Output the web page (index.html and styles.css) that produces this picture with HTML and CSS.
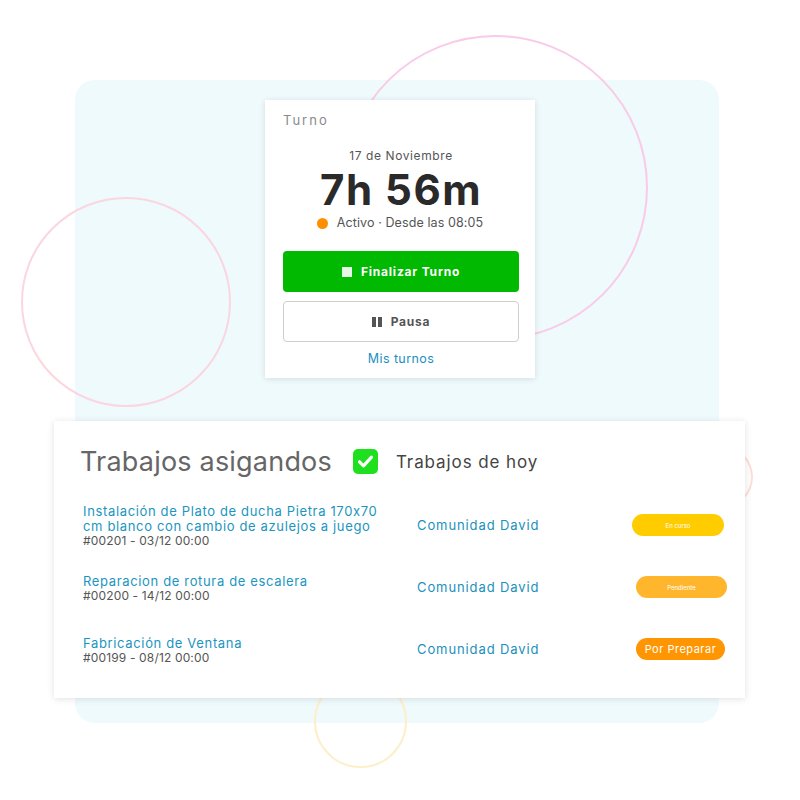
FILE: index.html
```html
<!DOCTYPE html>
<html lang="es">
<head>
  <meta charset="UTF-8">
  <meta name="viewport" content="width=device-width, initial-scale=1.0">
  <title>Turno</title>
  <link rel="stylesheet" href="styles.css">
</head>
<body>
  <div class="stage">
    <div class="panel"></div>
    <div class="ring ring-left"></div>
    <div class="ring ring-big"></div>
    <div class="ring ring-yellow"></div>
    <div class="ring ring-orange"></div>

    <div class="turno">
      <div class="turno-title">Turno</div>
      <div class="fecha">17 de Noviembre</div>
      <div class="tiempo">7h 56m</div>
      <div class="estado"><span class="dot"></span>Activo · Desde las 08:05</div>
      <button class="btn btn-fin"><span class="stop"></span>Finalizar Turno</button>
      <button class="btn btn-pausa"><span class="pause"><i></i><i></i></span>Pausa</button>
      <a class="mis" href="#">Mis turnos</a>
    </div>

    <div class="trabajos">
      <div class="head">
        <h2>Trabajos asigandos</h2>
        <span class="check">
          <svg width="25" height="25" viewBox="0 0 25 25"><rect x="0" y="0" width="25" height="25" rx="5" fill="#1ee01e"/><path d="M6.5 12.8l4 4 8-8.6" fill="none" stroke="#fff" stroke-width="3.2" stroke-linecap="round" stroke-linejoin="round"/></svg>
        </span>
        <span class="hoy">Trabajos de hoy</span>
      </div>

      <div class="row">
        <div class="job">
          <div class="job-name">Instalación de Plato de ducha Pietra 170x70 cm blanco con cambio de azulejos a juego</div>
          <div class="job-id">#00201 - 03/12 00:00</div>
        </div>
        <div class="cliente">Comunidad David</div>
        <span class="badge curso">En curso</span>
      </div>
      <div class="row">
        <div class="job">
          <div class="job-name">Reparacion de rotura de escalera</div>
          <div class="job-id">#00200 - 14/12 00:00</div>
        </div>
        <div class="cliente">Comunidad David</div>
        <span class="badge pend">Pendiente</span>
      </div>
      <div class="row">
        <div class="job">
          <div class="job-name">Fabricación de Ventana</div>
          <div class="job-id">#00199 - 08/12 00:00</div>
        </div>
        <div class="cliente">Comunidad David</div>
        <span class="badge prep">Por Preparar</span>
      </div>
    </div>
  </div>
</body>
</html>
```

FILE: styles.css
```css
body {
    margin: 0;
    background: #fff;
    font-family: Inter, "Noto Sans", sans-serif;
}

.stage {
    position: relative;
    width: 800px;
    height: 800px;
    padding-top: 100px;
    box-sizing: border-box;
    overflow: hidden;
}

/* fondo decorativo */
.panel {
    position: absolute;
    left: 75px;
    top: 80px;
    width: 644px;
    height: 643px;
    background: #eefafc;
    border-radius: 20px;
}
.ring {
    position: absolute;
    border-radius: 50%;
    box-sizing: border-box;
}
.ring-left {
    left: 21px;
    top: 197px;
    width: 210px;
    height: 210px;
    border: 2px solid #fcd6df;
}
.ring-big {
    left: 343px;
    top: 35px;
    width: 305px;
    height: 305px;
    border: 2px solid #f9cbe8;
}
.ring-yellow {
    left: 314px;
    top: 675px;
    width: 93px;
    height: 93px;
    border: 2px solid #fdefc9;
}
.ring-orange {
    left: 692px;
    top: 446px;
    width: 61px;
    height: 62px;
    border: 2px solid #fddfd6;
}

/* tarjeta turno */
.turno {
    position: relative;
    margin-left: 265px;
    width: 270px;
    height: 278px;
    box-sizing: border-box;
    background: #fff;
    box-shadow: 0 1px 6px rgba(0, 0, 0, 0.12);
    padding: 12px 16px 0 18px;
    text-align: center;
    color: #555;
}
.turno-title {
    text-align: left;
    font-size: 13px;
    letter-spacing: 2px;
    color: #8a8a8a;
    line-height: 16px;
}
.fecha {
    margin-top: 20px;
    font-size: 12px;
    line-height: 16px;
    color: #555;
    letter-spacing: 0.6px;
}
.tiempo {
    margin-top: 3px;
    font-size: 42px;
    font-weight: 700;
    line-height: 46px;
    color: #2a2a2a;
    letter-spacing: 1.5px;
}
.estado {
    margin-top: 2px;
    font-size: 12.5px;
    line-height: 16px;
    display: flex;
    justify-content: center;
    align-items: center;
    gap: 9px;
    padding-right: 2px;
    letter-spacing: 0.1px;
}
.dot {
    width: 11px;
    height: 11px;
    border-radius: 50%;
    background: #ff8f00;
}
.btn {
    display: flex;
    justify-content: center;
    align-items: center;
    gap: 9px;
    width: 236px;
    height: 41px;
    box-sizing: border-box;
    font-family: inherit;
    font-size: 12px;
    font-weight: 700;
    letter-spacing: 0.8px;
    border-radius: 4px;
    cursor: pointer;
}
.btn-fin {
    margin-top: 20px;
    border: none;
    background: #00b900;
    color: #fff;
}
.stop {
    width: 10px;
    height: 10px;
    background: #e6f7e6;
}
.btn-pausa {
    margin-top: 9px;
    border: 1px solid #cfcfcf;
    background: #fff;
    color: #555;
}
.pause {
    display: flex;
    gap: 2px;
}
.pause i {
    width: 4px;
    height: 10px;
    background: #555;
}
.mis {
    display: block;
    margin-top: 9px;
    font-size: 12.5px;
    color: #1b8fc0;
    text-decoration: none;
    letter-spacing: 0.4px;
}

/* tarjeta trabajos */
.trabajos {
    position: relative;
    margin: 43px 0 0 54px;
    width: 691px;
    height: 277px;
    box-sizing: border-box;
    background: #fff;
    box-shadow: 0 1px 7px rgba(0, 0, 0, 0.12);
    padding: 25px 21px 0 29px;
}
.head {
    display: flex;
    align-items: center;
    height: 30px;
    margin-bottom: 18px;
}
.head h2 {
    margin: 0 21px 0 -3px;
    font-size: 27px;
    font-weight: 400;
    color: #666;
    letter-spacing: 0.2px;
}
.check {
    display: flex;
}
.check svg {
    display: block;
}
.hoy {
    margin-left: 18px;
    font-size: 17px;
    color: #444;
    padding-top: 2px;
    letter-spacing: 0.9px;
}
.row {
    display: grid;
    grid-template-columns: 334px 215px 92px;
    align-items: center;
    height: 62px;
}
.job {
    padding-top: 2px;
}
.job-name {
    font-size: 13px;
    line-height: 15px;
    color: #1b95c0;
    letter-spacing: 0.65px;
    padding-right: 30px;
}
.job-id {
    font-size: 12px;
    line-height: 14px;
    color: #555;
    letter-spacing: 0.15px;
}
.cliente {
    font-size: 13px;
    color: #1a90bc;
    letter-spacing: 0.9px;
}
.badge {
    display: flex;
    justify-content: center;
    align-items: center;
    height: 22px;
    border-radius: 11px;
    color: #fff;
    font-size: 6px;
}
.curso {
    background: #ffcc00;
}
.pend {
    background: #ffb62c;
    margin-left: 4px;
    margin-right: -3px;
}
.prep {
    background: #ff9500;
    font-size: 11px;
    letter-spacing: 0.5px;
    margin-left: 4px;
    margin-right: -1px;
}
```
